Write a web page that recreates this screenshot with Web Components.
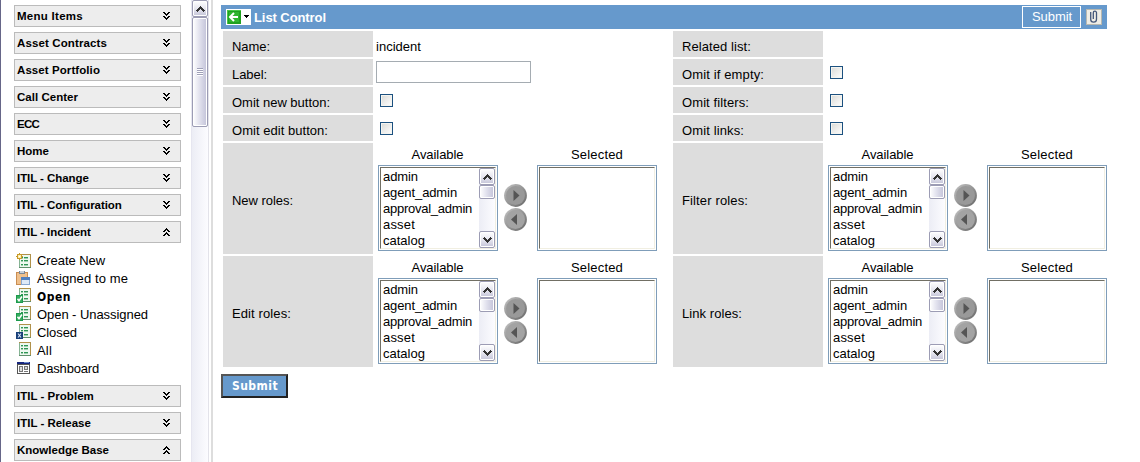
<!DOCTYPE html>
<html lang="en">
<head>
<meta charset="utf-8">
<title>List Control</title>
<style>
html,body{margin:0;height:100%;overflow:hidden;background:#fff}
body{font:13px/16px "Liberation Sans",Arial,sans-serif;color:#000}
</style>
</head>
<body>
<app-shell></app-shell>
<script>
const define = (name, html, init) => {
  const t = document.createElement('template');
  t.innerHTML = html;
  customElements.define(name, class extends HTMLElement {
    connectedCallback() {
      if (this.shadowRoot) return;
      this.attachShadow({mode: 'open'}).append(t.content.cloneNode(true));
      if (init) init(this, this.shadowRoot);
    }
  });
};

// Text run tracked so that it fills a given width.
const ruler = document.createElement('canvas').getContext('2d');
define('fit-text', `<style>:host{display:block;white-space:nowrap}</style><slot></slot>`, el => {
  const cs = getComputedStyle(el), s = el.textContent;
  ruler.font = `${cs.fontWeight} ${cs.fontSize} ${cs.fontFamily}`;
  el.style.letterSpacing = ((+el.getAttribute('w') - ruler.measureText(s).width) / s.length).toFixed(3) + 'px';
  el.style.width = el.getAttribute('w') + 'px';
});

// Icons
const doc = `<path fill="#eef8f0" d="M4 2h10v12H4z"/><path fill="#86b394" d="M3 1h1v14H3z"/><path fill="#b0914a" d="M3 1h12v1H3zM14 1h1v14h-1z"/><path fill="#5f8f6c" d="M3 14h12v1H3z"/><path fill="#2f9656" d="M5 4h2v1H5zM5 7h2v1H5zM5 11h2v1H5zM8 4h4v1H8zM8 7h4v1H8zM8 11h4v1H8z"/><path fill="#9fcfae" d="M5 5h2v1H5zM8 5h4v1H8zM8 8h4v1H8zM5 8h2v1H5zM8 12h4v1H8zM5 12h2v1H5z"/>`;
const chev = `<path d="M0 0h2v1H0zM5 0h2v1H5zM1 1h2v1H1zM4 1h2v1H4zM2 2h3v1H2zM3 3h1v1H3zM0 4h2v1H0zM5 4h2v1H5zM1 5h2v1H1zM4 5h2v1H4zM2 6h3v1H2zM3 7h1v1H3z"/>`;
const ICONS = {
  down: [7, 8, chev],
  up: [7, 8, `<g transform="matrix(1 0 0 -1 0 8)">${chev}</g>`],
  create: [16, 16, `<g transform="translate(0 2)">${doc}</g><g transform="translate(0 2)"><path fill="#c79a2c" d="M3 0h1v7H3zM0 3h7v1H0zM1 1h2v2H1zM4 1h2v2H4zM1 4h2v2H1zM4 4h2v2H4z"/><path fill="#ffefb0" d="M2 2h3v3H2z"/><path fill="#fff" d="M3 3h1v1H3z"/></g>`],
  assigned: [16, 16, `<g transform="translate(0 1)"><path fill="#c98d52" d="M0 2h12v13H0z"/><path fill="#efc08c" d="M1 3h10v11H1z"/><path fill="#7c8794" d="M3 1h6v3H3z"/><path fill="#c8d0da" d="M4 1h4v2H4z"/><path fill="#fff" d="M6 8h8v7H6z"/><path fill="#4f7fc0" d="M5 7h9v3H5z"/><path fill="#8aa9d3" d="M5 10h1v5H5zM13 10h1v5h-1zM5 14h9v1H5z"/><path fill="#dfeaf8" d="M6 10h7v4H6z"/></g>`],
  open: [16, 16, doc + `<path fill="#1c9a4c" d="M0 8h7v8H0z"/><path fill="#35ad5f" d="M1 9h5v6H1z"/><path d="M1.500 11.800 3 13.700 6 9.500" fill="none" stroke="#fff" stroke-width="1.500" shape-rendering="auto"/>`],
  closed: [16, 16, doc + `<path fill="#173f78" d="M0 9h7v7H0z"/><path d="M2 10.500 5 14.500M5 10.500 2 14.500" stroke="#dce8fa" stroke-width="1.100" shape-rendering="auto"/>`],
  all: [16, 16, doc],
  dash: [16, 16, `<path fill="#555" d="M1 3h13v12H1z"/><path fill="#fff" d="M2 6h11v8H2z"/><path fill="#17277e" d="M1 3h13v2H1z"/><path fill="#6c8bd0" d="M8 3h5v1H8z"/><path fill="#777" d="M3 7h4v6H3zM8 7h4v4H8zM8 12h4v1H8z"/><path fill="#ddd" d="M4 8h2v4H4zM9 8h2v2H9z"/>`],
  arrUp: [9, 6, `<path fill="#333" d="M4 0h1v1H4zM3 1h3v1H3zM2 2h5v1H2zM1 3h3v1H1zM5 3h3v1H5zM0 4h3v1H0zM6 4h3v1H6zM1 5h1v1H1zM7 5h1v1H7z"/>`],
  arrDown: [9, 6, `<path fill="#333" d="M4 5h1v1H4zM3 4h3v1H3zM2 3h5v1H2zM1 2h3v1H1zM5 2h3v1H5zM0 1h3v1H0zM6 1h3v1H6zM1 0h1v1H1zM7 0h1v1H7z"/>`],
  back: [25, 16, `<path fill="#fff" d="M0 0h25v16H0z"/><path fill="#20a020" d="M1 1h14v14H1z"/><path fill="#48c648" d="M1 1h14v1H1zM1 1h1v14H1z"/><path fill="#2fb52f" d="M3 3h10v10H3z"/><path d="M8 4 4 8l4 4M4 8h8" fill="none" stroke="#fff" stroke-width="2" shape-rendering="auto"/><path d="M18 6h5v1h-5zM19 7h3v1h-3zM20 8h1v1h-1z"/>`],
  clip: [16, 16, `<path fill="#b8b8b0" d="M0 0h16v16H0z"/><path fill="#eeede6" d="M1 1h14v14H1z"/><path d="M4.700 3v7.200a2.900 2.900 0 0 0 5.800 0V3.800a1.600 1.600 0 0 0-3.200 0V10" fill="none" stroke="#43577a" stroke-width="1.300" shape-rendering="auto"/>`]
};
define('ui-icon', `<style>:host{display:block;flex:none}svg{display:block;overflow:visible}</style><div></div>`, (el, r) => {
  const [w, h, body] = ICONS[el.getAttribute('name')];
  el.style.width = w + 'px';
  r.querySelector('div').innerHTML = `<svg width="${w}" height="${h}" viewBox="0 0 ${w} ${h}" shape-rendering="crispEdges">${body}</svg>`;
});

define('menu-section', `<style>
:host{display:flex;box-sizing:border-box;width:167px;height:22px;border:1px solid #bbb;background:#ededed;align-items:center;justify-content:space-between;padding:0 10px 0 2px;margin-bottom:5px;font-size:11.5px;font-weight:bold;line-height:20px}
</style><slot></slot>`);

define('menu-item', `<style>
:host{display:flex;height:18px;gap:5px;align-items:flex-start;padding-left:2px;line-height:16px}
:host([active]){font:bold 12px/16px "DejaVu Sans Condensed","DejaVu Sans",sans-serif}
.t{padding-top:2px}
</style><div class="i"></div><div class="t"><slot></slot></div>`, (el, r) => {
  r.querySelector('.i').innerHTML = `<ui-icon name="${el.getAttribute('icon')}"></ui-icon>`;
});

// XP-style vertical scroll bar
define('scroll-bar', `<style>
:host{display:flex;flex-direction:column;width:16px;flex:none;box-sizing:border-box;background:linear-gradient(90deg,#ecedf5,#fcfcff)}
.b{box-sizing:border-box;width:16px;height:17px;border:1px solid #9c9cb4;border-radius:2px;display:flex;align-items:center;justify-content:center;background:linear-gradient(#fff,#e4e4ee 55%,#c4c4d8);box-shadow:inset 0 0 0 1px #fff;flex:none}
.t{background:linear-gradient(90deg,#fff,#e2e2ee 45%,#c2c2d8)}
.s{flex:1}
.g{width:6px;height:8px;background:repeating-linear-gradient(#9fa0b8 0 1px,#fff 1px 2px)}
</style><div class="b"><ui-icon name="arrUp"></ui-icon></div><div class="b t"></div><div class="s"></div>`, (el, r) => {
  r.querySelector('.t').style.height = el.getAttribute('thumb') + 'px';
  if (el.hasAttribute('grip')) r.querySelector('.t').innerHTML = '<div class="g"></div>';
  if (el.hasAttribute('end')) r.append(Object.assign(document.createElement('div'), {className: 'b', innerHTML: '<ui-icon name="arrDown"></ui-icon>'}));
});

define('side-nav', `<style>
:host{display:flex;box-sizing:border-box;width:213px;height:462px;border-left:1px solid #666688;border-right:2px solid #ddd;overflow:hidden;flex:none}
.m{width:190px;flex:none;box-sizing:border-box;padding:5px 0 0 13px}
.i{padding:3px 0 8px}
scroll-bar{border-left:1px solid #e6e6f0;border-right:1px solid #e3e3ea;height:462px;width:18px}
</style>
<div class="m">
<menu-section><fit-text w="66">Menu Items</fit-text><ui-icon name="down"></ui-icon></menu-section>
<menu-section><fit-text w="90">Asset Contracts</fit-text><ui-icon name="down"></ui-icon></menu-section>
<menu-section><fit-text w="83">Asset Portfolio</fit-text><ui-icon name="down"></ui-icon></menu-section>
<menu-section><fit-text w="61">Call Center</fit-text><ui-icon name="down"></ui-icon></menu-section>
<menu-section><fit-text w="22">ECC</fit-text><ui-icon name="down"></ui-icon></menu-section>
<menu-section><fit-text w="32">Home</fit-text><ui-icon name="down"></ui-icon></menu-section>
<menu-section><fit-text w="72">ITIL - Change</fit-text><ui-icon name="down"></ui-icon></menu-section>
<menu-section><fit-text w="105">ITIL - Configuration</fit-text><ui-icon name="down"></ui-icon></menu-section>
<menu-section><fit-text w="74">ITIL - Incident</fit-text><ui-icon name="up"></ui-icon></menu-section>
<div class="i">
<menu-item icon="create"><fit-text w="68">Create New</fit-text></menu-item>
<menu-item icon="assigned"><fit-text w="91">Assigned to me</fit-text></menu-item>
<menu-item icon="open" active><fit-text w="34">Open</fit-text></menu-item>
<menu-item icon="open"><fit-text w="111">Open - Unassigned</fit-text></menu-item>
<menu-item icon="closed"><fit-text w="40">Closed</fit-text></menu-item>
<menu-item icon="all"><fit-text w="15">All</fit-text></menu-item>
<menu-item icon="dash"><fit-text w="62">Dashboard</fit-text></menu-item>
</div>
<menu-section><fit-text w="77">ITIL - Problem</fit-text><ui-icon name="down"></ui-icon></menu-section>
<menu-section><fit-text w="74">ITIL - Release</fit-text><ui-icon name="down"></ui-icon></menu-section>
<menu-section><fit-text w="92">Knowledge Base</fit-text><ui-icon name="up"></ui-icon></menu-section>
</div>
<scroll-bar thumb="110" grip></scroll-bar>`);

define('title-bar', `<style>
:host{display:flex;align-items:center;height:24px;width:886px;box-sizing:border-box;background:#69c;color:#fff;padding:0 5px}
.t{font-weight:bold;margin-left:3px;padding-top:1px;flex:1}
.s{box-sizing:border-box;width:59px;height:22px;border:1px solid #fff;padding-left:9px;line-height:20px;margin-right:5px}
</style><ui-icon name="back"></ui-icon><div class="t"><fit-text w="72">List Control</fit-text></div>
<div class="s"><fit-text w="40">Submit</fit-text></div><ui-icon name="clip"></ui-icon>`);

define('field-label', `<style>
:host{display:flex;align-items:center;box-sizing:border-box;background:#ddd;padding:6px 0 0 9px}
:host([tall]){padding-top:5px}
</style><slot></slot>`);

define('check-box', `<style>
:host{display:block;box-sizing:border-box;width:13px;height:13px;border:1px solid #1c5180;background:linear-gradient(135deg,#d9d9d5,#fff);box-shadow:inset 0 0 0 1px #f4f4f0;margin:7px 0 0 5px}
</style>`);

define('text-box', `<style>
:host{display:block;box-sizing:border-box;width:155px;height:22px;border:1px solid #a5acb2;background:#fff;margin:2px 0 0 1px}
</style>`);

define('list-box', `<style>
:host{display:block;box-sizing:border-box;width:120px;height:86px;border:1px solid #7f9db9;padding:1px}
.in{display:flex;box-sizing:border-box;height:82px;border:1px solid;border-color:#716f64 #f1efe2 #f1efe2 #716f64}
.o{flex:1;padding:1px 0 0 2px;width:0;height:79px;overflow:hidden}
scroll-bar{height:80px}
</style><div class="in"><div class="o"><slot></slot></div></div>`, (el, r) => {
  if (el.hasAttribute('scroll')) r.querySelector('.in').insertAdjacentHTML('beforeend', '<scroll-bar thumb="14" end></scroll-bar>');
});

define('move-button', `<style>:host{display:block;height:23px}svg{display:block}</style>
<svg width="23" height="23" viewBox="0 0 23 23"><defs><linearGradient id="g" x1="0" y1="0" x2="1" y2="1"><stop offset="0" stop-color="#c4c4c4"/><stop offset="1" stop-color="#666"/></linearGradient></defs>
<circle cx="11.5" cy="11.5" r="11.4" fill="url(#g)"/><circle class="f" cx="11.5" cy="11.5" r="9.4" fill="#999"/><path fill="#555" d="M9.5 6v11l6-5.5z"/></svg>`, (el, r) => {
  if (el.hasAttribute('back')) {
    r.querySelector('path').setAttribute('d', 'M13 6v11L7 11.500z');
    r.querySelector('.f').setAttribute('fill', '#a3a3a3');
  }
});

define('role-picker', `<style>
:host{display:flex;padding:3px 0 0 3px}
.c{width:120px}
.h{display:flex;height:16px;padding:1px 0 2px 34px}
.a{padding-left:33.500px}
.m{width:23px;padding:38px 10px 0 6px;display:flex;flex-direction:column;gap:1px}
</style>
<div class="c"><div class="h a"><fit-text w="52">Available</fit-text></div>
<list-box scroll><fit-text w="35">admin</fit-text><fit-text w="74">agent_admin</fit-text><fit-text w="89">approval_admin</fit-text><fit-text w="32">asset</fit-text><fit-text w="42">catalog</fit-text></list-box></div>
<div class="m"><move-button></move-button><move-button back></move-button></div>
<div class="c"><div class="h"><fit-text w="52">Selected</fit-text></div><list-box></list-box></div>`);

define('form-grid', `<style>
:host{display:grid;grid-template-columns:150px 296px 150px 282px;grid-template-rows:repeat(4,26px) repeat(2,111px);gap:2px;padding:2px 0 0 2px}
.v{padding:8px 0 0 1px}
</style>
<field-label><fit-text w="38">Name:</fit-text></field-label><div class="v"><fit-text w="45">incident</fit-text></div>
<field-label><fit-text w="69">Related list:</fit-text></field-label><div></div>
<field-label><fit-text w="35">Label:</fit-text></field-label><div><text-box></text-box></div>
<field-label><fit-text w="82">Omit if empty:</fit-text></field-label><div><check-box></check-box></div>
<field-label><fit-text w="98">Omit new button:</fit-text></field-label><div><check-box></check-box></div>
<field-label><fit-text w="67">Omit filters:</fit-text></field-label><div><check-box></check-box></div>
<field-label><fit-text w="96">Omit edit button:</fit-text></field-label><div><check-box></check-box></div>
<field-label><fit-text w="62">Omit links:</fit-text></field-label><div><check-box></check-box></div>
<field-label tall><fit-text w="61">New roles:</fit-text></field-label><role-picker></role-picker>
<field-label tall><fit-text w="66">Filter roles:</fit-text></field-label><role-picker></role-picker>
<field-label tall><fit-text w="59">Edit roles:</fit-text></field-label><role-picker></role-picker>
<field-label tall><fit-text w="60">Link roles:</fit-text></field-label><role-picker></role-picker>`);

define('submit-button', `<style>
:host{display:block;box-sizing:border-box;width:67px;height:24px;margin-top:7px;border:2px solid;border-color:#555 #222 #222 #555;background:#69c;color:#fff;padding-left:9px;font:bold 12px/20px "DejaVu Sans Condensed","DejaVu Sans",sans-serif}
</style><slot></slot>`);

define('app-shell', `<style>
:host{display:flex;height:462px}
main{padding:5px 0 0 8px}
</style><side-nav></side-nav><main><title-bar></title-bar><form-grid></form-grid><submit-button><fit-text w="46">Submit</fit-text></submit-button></main>`);
</script>
</body>
</html>
